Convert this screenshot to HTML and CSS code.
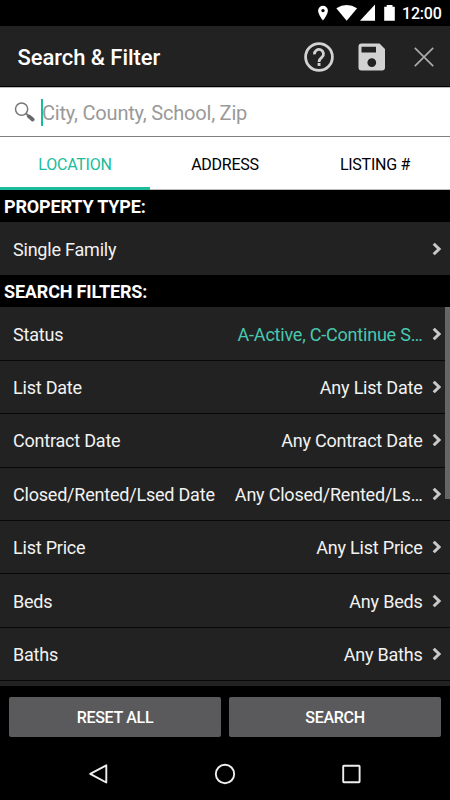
FILE: index.html
```html
<!DOCTYPE html>
<html lang="en">
<head>
    <meta charset="UTF-8">
    <meta name="viewport" content="width=device-width, initial-scale=1.0">
    <title>Search &amp; Filter</title>
    <link rel="stylesheet" href="styles.css">
</head>
<body>
    <svg class="sprite">
        <symbol id="chevron" viewBox="0 0 10 14">
            <path d="M1.7 1.7 L7.1 7 L1.7 12.3" fill="none" stroke="#c9c9c9" stroke-width="3"/>
        </symbol>
    </svg>
    <div class="screen">
        <div class="status-bar">
            <svg class="status-icons" width="80" height="26" viewBox="0 0 80 26">
                <path fill="#fff" fill-rule="evenodd" d="M5 5.8 A4.9 4.9 0 0 0 .1 10.7 C.1 14.3 5 20.6 5 20.6 S9.9 14.3 9.9 10.7 A4.9 4.9 0 0 0 5 5.8 Z M5 8.9 a1.7 1.7 0 1 1 0 3.4 a1.7 1.7 0 0 1 0 -3.4 Z"/>
                <path fill="#fff" d="M18.3 8.2 Q28.7 1.6 39.1 8.2 L28.7 20.7 Z"/>
                <path fill="#fff" d="M57 4.5 V20.8 H42 Z"/>
                <path fill="#fff" d="M68.7 5 H74.5 V6.7 H76.8 V20.8 H66.2 V6.7 H68.7 Z"/>
            </svg>
            <span class="clock">12:00</span>
        </div>

        <div class="toolbar">
            <h1>Search &amp; Filter</h1>
            <svg class="icon-help" width="32" height="32" viewBox="0 0 32 32">
                <circle cx="16" cy="16" r="13.4" fill="none" stroke="#d2d2d2" stroke-width="2.8"/>
                <path d="M11.5 13.3 A4.5 4.5 0 1 1 18.9 16.3 C17 17.8 16 18.5 16 21" fill="none" stroke="#d2d2d2" stroke-width="2.8"/>
                <rect x="14.6" y="22" width="2.9" height="2.9" fill="#d2d2d2"/>
            </svg>
            <svg class="icon-save" width="28" height="28" viewBox="0 0 28 28">
                <path fill="#d2d2d2" fill-rule="evenodd" d="M3.5 .5 H21.5 L27 6 V24.5 A3 3 0 0 1 24 27.5 H3.5 A3 3 0 0 1 .5 24.5 V3.5 A3 3 0 0 1 3.5 .5 Z M3.5 3.7 V9.5 H18 V3.7 Z M13.8 15.2 a4.4 4.4 0 1 0 0 8.8 a4.4 4.4 0 0 0 0 -8.8 Z"/>
            </svg>
            <svg class="icon-close" width="20" height="20" viewBox="0 0 20 20">
                <path d="M.8 .8 L19.2 19.2 M19.2 .8 L.8 19.2" stroke="#aaa" stroke-width="1.7"/>
            </svg>
        </div>

        <div class="search">
            <svg class="icon-search" width="21" height="21" viewBox="0 0 21 21">
                <circle cx="7.6" cy="7.1" r="6.1" fill="none" stroke="#777" stroke-width="1.5"/>
                <path d="M12 11.5 L14.5 14" stroke="#777" stroke-width="1.8"/>
                <path d="M15 14.4 L18.6 17.5" stroke="#686868" stroke-width="3.8" stroke-linecap="round"/>
            </svg>
            <span class="cursor"></span>
            <span class="placeholder">City, County, School, Zip</span>
        </div>

        <div class="tabs">
            <div class="tab active">LOCATION</div>
            <div class="tab">ADDRESS</div>
            <div class="tab">LISTING #</div>
        </div>

        <h2>PROPERTY TYPE:</h2>
        <div class="row single">
            <span class="label">Single Family</span>
            <svg class="chevron"><use href="#chevron"/></svg>
        </div>

        <h2>SEARCH FILTERS:</h2>
        <div class="filters">
            <div class="row">
                <span class="label">Status</span>
                <span class="value selected">A-Active, C-Continue S…</span>
                <svg class="chevron"><use href="#chevron"/></svg>
            </div>
            <div class="row">
                <span class="label">List Date</span>
                <span class="value">Any List Date</span>
                <svg class="chevron"><use href="#chevron"/></svg>
            </div>
            <div class="row">
                <span class="label">Contract Date</span>
                <span class="value">Any Contract Date</span>
                <svg class="chevron"><use href="#chevron"/></svg>
            </div>
            <div class="row">
                <span class="label">Closed/Rented/Lsed Date</span>
                <span class="value">Any Closed/Rented/Ls…</span>
                <svg class="chevron"><use href="#chevron"/></svg>
            </div>
            <div class="row">
                <span class="label">List Price</span>
                <span class="value">Any List Price</span>
                <svg class="chevron"><use href="#chevron"/></svg>
            </div>
            <div class="row">
                <span class="label">Beds</span>
                <span class="value">Any Beds</span>
                <svg class="chevron"><use href="#chevron"/></svg>
            </div>
            <div class="row">
                <span class="label">Baths</span>
                <span class="value">Any Baths</span>
                <svg class="chevron"><use href="#chevron"/></svg>
            </div>
            <div class="scrollbar"></div>
        </div>

        <div class="actions">
            <button>RESET ALL</button>
            <button>SEARCH</button>
        </div>

        <div class="nav-bar">
            <svg width="22" height="22" viewBox="0 0 22 22">
                <path d="M18.3 2.3 V19.5 L2.2 10.9 Z" fill="none" stroke="#eee" stroke-width="1.9" stroke-linejoin="round"/>
            </svg>
            <svg width="22" height="22" viewBox="0 0 22 22">
                <circle cx="11" cy="11" r="9.2" fill="none" stroke="#eee" stroke-width="1.9"/>
            </svg>
            <svg width="22" height="22" viewBox="0 0 22 22">
                <rect x="3.2" y="2.8" width="16.4" height="16.4" rx=".6" fill="none" stroke="#eee" stroke-width="1.9"/>
            </svg>
        </div>
    </div>
</body>
</html>
```

FILE: styles.css
```css
* {
    box-sizing: border-box;
}
body {
    margin: 0;
    background-color: #000;
    font-family: Roboto, "Liberation Sans", sans-serif;
}
svg {
    display: block;
    flex: none;
}
.sprite {
    display: none;
}
.screen {
    width: 450px;
    height: 800px;
    display: flex;
    flex-direction: column;
    overflow: hidden;
    color: #fff;
}
.status-bar {
    height: 26px;
    display: flex;
    align-items: center;
    justify-content: flex-end;
    padding-right: 8px;
}
.clock {
    width: 40px;
    margin-left: 4px;
    padding-top: 2px;
    font-size: 16px;
    font-weight: 500;
    line-height: 20px;
    letter-spacing: -0.2px;
    white-space: nowrap;
}
.toolbar {
    height: 61px;
    display: flex;
    align-items: center;
    padding: 1px 16px 0 17.5px;
    background-color: #222;
    border-bottom: 1px solid #000;
}
h1 {
    flex: 1;
    margin: 3px 0 0;
    font-size: 22px;
    font-weight: 500;
    line-height: 28px;
    letter-spacing: -0.05px;
}
.icon-save {
    margin-left: 23px;
}
.icon-close {
    margin-left: 28px;
}
.search {
    height: 50px;
    display: flex;
    align-items: center;
    padding-left: 14px;
    background-color: #fff;
    border-top: 1px solid #bbb;
    border-bottom: 1px solid #808080;
}
.cursor {
    width: 2px;
    height: 27px;
    margin: 0 -1px 0 6px;
    background-color: #1abc9c;
}
.placeholder {
    padding-top: 2px;
    font-size: 20px;
    line-height: 24px;
    letter-spacing: -0.2px;
    color: #999;
}
.tabs {
    height: 53px;
    display: flex;
    background-color: #fff;
    color: #000;
}
.tab {
    flex: 1;
    padding-top: 2px;
    border-bottom: 1px solid #bbb;
    font-size: 16px;
    line-height: 51px;
    letter-spacing: -0.25px;
    text-align: center;
}
.tab.active {
    color: #1abc9c;
    border-bottom: 3px solid #1abc9c;
}
h2 {
    height: 32px;
    margin: 0;
    padding: 1px 4px 0;
    font-size: 18px;
    font-weight: 700;
    line-height: 32px;
    letter-spacing: -0.17px;
}
.row {
    height: 53.4px;
    display: flex;
    align-items: center;
    padding: 1px 8px 0 13px;
    background-color: #222;
    border-bottom: 1px solid #080808;
    font-size: 18px;
    line-height: 24px;
    letter-spacing: -0.21px;
    color: #f2f2f2;
}
.row.single {
    height: 53px;
    border-bottom: 0;
}
.label {
    flex: 1;
    padding-top: 1px;
    white-space: nowrap;
}
.row.single .label {
    padding-top: 2px;
}
.value {
    padding-top: 1px;
    white-space: nowrap;
}
.value.selected {
    color: #48c9b0;
}
.chevron {
    width: 10px;
    height: 14px;
    margin: -1px 0 0 9.5px;
}
.filters {
    position: relative;
    height: 379px;
    padding-top: 0.5px;
    overflow: hidden;
    background-color: #222;
}
.scrollbar {
    position: absolute;
    top: 0;
    right: 0;
    width: 5px;
    height: 192px;
    background-color: #666;
}
.actions {
    height: 61px;
    display: flex;
    gap: 8px;
    padding: 11px 9px 10px 9px;
}
.actions button {
    flex: 1;
    padding: 1px 0 0;
    border: 0;
    border-radius: 2px;
    background-color: #5a5a5c;
    color: #fff;
    font-family: inherit;
    font-size: 16px;
    font-weight: 500;
    letter-spacing: -0.3px;
}
.nav-bar {
    height: 53px;
    display: flex;
    justify-content: center;
    gap: 104px;
    padding-top: 16px;
}
```
